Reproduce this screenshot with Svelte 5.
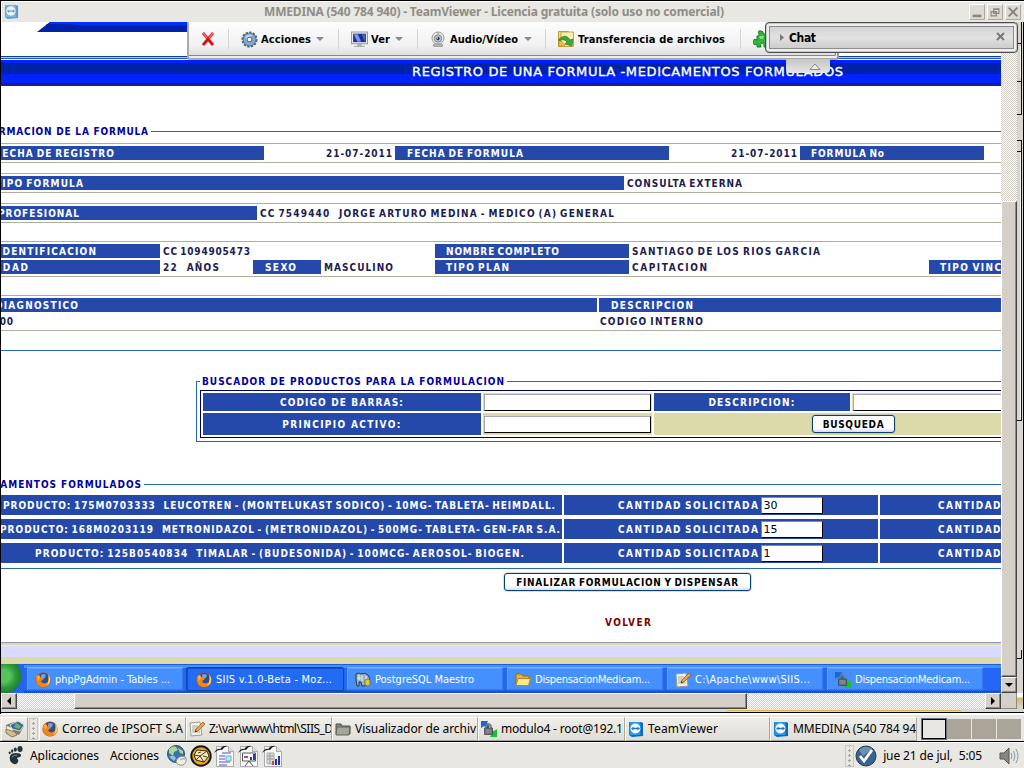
<script>
  // Spreads the letters of a label over the given width in pixels.
  function fit(node, width) {
    node.style.letterSpacing = '0px';
    const natural = node.getBoundingClientRect().width;
    const gaps = Math.max(1, node.textContent.length - 1);
    node.style.letterSpacing = `${(width - natural) / gaps}px`;
  }

  // cell: [width, kind, left padding, text, text width]
  const bands = [
    { top: 0, rows: [[[263, 'b', -6, 'FECHA DE REGISTRO', 119], [131, 'w', 62, '21-07-2011', 66], [274, 'b', 12, 'FECHA DE FORMULA', 116], [131, 'w', 62, '21-07-2011', 66], [184, 'b', 11, 'FORMULA No', 73]]] },
    { top: 10, rows: [[[623, 'b', -6, 'TIPO FORMULA', 88], [377, 'w', 3, 'CONSULTA EXTERNA', 115]]] },
    { top: 10, rows: [[[256, 'b', -3, 'PROFESIONAL', 81], [744, 'w', 3, 'CC 7549440\u00a0\u00a0 JORGE ARTURO MEDINA - MEDICO (A) GENERAL', 354]]] },
    { top: 18, rows: [
      [[159, 'b', -3, 'IDENTIFICACION', 98], [275, 'w', 3, 'CC 1094905473', 87], [194, 'b', 11, 'NOMBRE COMPLETO', 113], [371, 'w', 3, 'SANTIAGO DE LOS RIOS GARCIA', 188]],
      [[159, 'b', -6, 'EDAD', 33], [93, 'w', 3, '22\u00a0\u00a0 AÑOS', 56], [68, 'b', 12, 'SEXO', 31], [114, 'w', 3, 'MASCULINO', 69], [194, 'b', 11, 'TIPO PLAN', 63], [300, 'w', 3, 'CAPITACION', 75], [72, 'b', 11, 'TIPO VINCULACION', 116]]
    ] },
    { top: 18, rows: [
      [[596, 'b', -6, 'DIAGNOSTICO', 83], [2, 'w', 0, '', 0], [402, 'b', 12, 'DESCRIPCION', 82]],
      [[598, 'w', -9, 'A00', 21], [402, 'w', 1, 'CODIGO INTERNO', 103]]
    ] }
  ];

  const products = [
    [2, 'PRODUCTO: 175M0703333\u00a0\u00a0 LEUCOTREN - (MONTELUKAST SODICO) - 10MG- TABLETA- HEIMDALL.', 552, '30'],
    [-1, 'PRODUCTO: 168M0203119\u00a0\u00a0 METRONIDAZOL - (METRONIDAZOL) - 500MG- TABLETA- GEN-FAR S.A.', 560, '15'],
    [34, 'PRODUCTO: 125B0540834\u00a0\u00a0 TIMALAR - (BUDESONIDA) - 100MCG- AEROSOL- BIOGEN.', 489, '1']
  ];

  const xpTasks = [
    ['fox', 'phpPgAdmin - Tables ...', 115],
    ['fox', 'SIIS v.1.0-Beta - Moz...', 116],
    ['pg', 'PostgreSQL Maestro', 99],
    ['folder', 'DispensacionMedicam...', 115],
    ['note', 'C:\\Apache\\www\\SIIS...', 115],
    ['putty', 'DispensacionMedicam...', 115]
  ];

  const panelTasks = [
    ['fox', 'Correo de IPSOFT S.A', 121, 147],
    ['note', 'Z:\\var\\www\\html\\SIIS_D', 124, 146],
    ['cabinet', 'Visualizador de archiv', 121, 146],
    ['putty', 'modulo4 - root@192.1', 122, 147],
    ['tv', 'TeamViewer', 70, 145],
    ['tv', 'MMEDINA (540 784 94', 123, 147]
  ];
</script>

{#snippet icon(name, size)}
  <svg class="icon" width={size} height={size} viewBox="0 0 16 16">
    {#if name === 'fox'}
      <circle cx="8" cy="8" r="7.6" fill="#c8440c" />
      <circle cx="8.6" cy="6.4" r="5.3" fill="#294c9b" />
      <path d="M6 3q2-2 5 0l-1 3-4 1z" fill="#70a6da" />
      <path d="M1 3l1 2 2-2 1 2 4 1-1 2-2 1q1 3 5 2 4-1 2-7l2 3q1 6-5 8-8 1-9-6z" fill="#ec851d" />
      <path d="M13 2q4 5 1 10l-3 2q4-5 2-12z" fill="#ffd34b" />
      <path d="M2 4l2-1 1 3-2 3z" fill="#ffb43a" />
    {:else if name === 'note'}
      <path d="M1 2l10-1 2 13-11 1z" fill="#f5f5ec" stroke="#9a9c91" />
      <path d="M3 5h6M3 7h5M3 9h7M3 11h8" stroke="#a6aaa1" />
      <path d="M6 11l1-3 7-7 2 2-7 7z" fill="#eba13c" stroke="#86592b" stroke-width=".7" />
      <path d="M6 11l.5-2 1.3 1.3z" fill="#222" />
    {:else if name === 'folder'}
      <path d="M1 13V3.5Q1 2 2 2h4l2 2h6v9z" fill="#e6b43c" stroke="#9c6b08" />
      <path d="M1 13.5l2-7h12.5l-2 7z" fill="#ffe98b" stroke="#b98616" />
    {:else if name === 'cabinet'}
      <path d="M1 13V3h5l1 2h8v8z" fill="#85867b" stroke="#52534c" />
      <path d="M2 6h13l-1 8H1z" fill="#a5a69a" stroke="#626359" />
    {:else if name === 'pg'}
      <path d="M1 2q3-2 5 0 4-2 7 1l2 4-2 3-2-2-1 6H7L6 10H4v4H2L1 8z" fill="#9bb3bd" stroke="#263c48" />
      <path d="M4 3v5M7 3v6M11 4v5M2 6h4" stroke="#e7f2f5" />
      <path d="M10 8q3-2 5 0v5q-2 2-5 0z" fill="#e7c33e" stroke="#806013" stroke-width=".7" />
    {:else if name === 'putty'}
      <path d="M0 0h7L6 2l3 3-2 3-4-3-3 2z" fill="#1768d8" />
      <path d="M16 16H9l1-2-2-3 2-2 3 1 3-2z" fill="#18c032" />
      <path d="M5 7V4.500q2.500-3.500 5 0V7" fill="none" stroke="#777d80" stroke-width="1.600" />
      <path d="M3.500 7h8v6.500h-8z" fill="#6d7173" stroke="#3c3f41" stroke-width=".7" />
      <path d="M5 9h5M5 11h5" stroke="#a3a9ac" stroke-width=".7" />
    {:else if name === 'tv'}
      <path d="M1 1h12l2 1v13l-11 1-3-2z" fill="#0d68bd" />
      <path d="M1.500 1h11v13h-11z" fill="#2799ea" />
      <circle cx="7.400" cy="7.500" r="5" fill="#f7fcff" />
      <path d="M3 7.500l2.500-2v1.300h4V5.500l2.500 2-2.500 2V8.200h-4v1.300z" fill="#1678cf" />
    {:else if name === 'gear'}
      <circle cx="8" cy="8" r="6.600" fill="#6f8fb2" stroke="#4b6889" stroke-width="2" stroke-dasharray="2.200 1.200" />
      <circle cx="8" cy="8" r="5.500" fill="#86a6c6" />
      <path d="M4 5q3-3 7-1l-3 2-3 3z" fill="#bed2e5" />
      <circle cx="8" cy="8" r="2.200" fill="#fff" stroke="#587698" />
    {:else if name === 'screen'}
      <path d="M.5 1h15v11H.5z" fill="#eee" stroke="#9b9b9b" />
      <path d="M2 2.500h12v8H2z" fill="#1a2f9c" />
      <path d="M2.500 3h4l3 7H6z" fill="#7f93e6" /><path d="M10 3l3 0v7z" fill="#456bdb" />
      <path d="M6 12h4v2H6z" fill="#aaa" /><path d="M3 14.500h10" stroke="#aaa" />
    {:else if name === 'cam'}
      <path d="M4 13l-1 2q5 2 10 0l-1-2z" fill="#b5b5b5" stroke="#8f8f8f" stroke-width=".7" />
      <circle cx="8" cy="7" r="6" fill="#e9e9e9" stroke="#999" />
      <circle cx="8" cy="7.500" r="3.700" fill="#bbc2cb" stroke="#878787" />
      <circle cx="8" cy="7.500" r="1.700" fill="#213c7b" /><circle cx="7.400" cy="6.900" r=".7" fill="#fff" />
      <path d="M8 1v2.500" stroke="#999" />
    {:else if name === 'transfer'}
      <path d="M.5.5h10v15H.5z" fill="#f6dc77" stroke="#bf992e" />
      <path d="M3 1h12.500v14.500H3z" fill="#f9edb0" stroke="#c5a546" />
      <path d="M1 8q7-6 11 1l3-1-1 7-7-2 2-2q-3-4-8-1z" fill="#43a33b" stroke="#267c28" stroke-width=".7" />
      <path d="M1 11q4-2 6 4H1z" fill="#f5b947" stroke="#c58a26" stroke-width=".6" />
    {/if}
  </svg>
{/snippet}

<div class="desktop">
  <header class="titlebar">
    <div class="app-logo">{@render icon('tv', 15)}</div>
    <div class="title"><span use:fit={460}>MMEDINA (540 784 940) - TeamViewer - Licencia gratuita (solo uso no comercial)</span></div>
    <div class="winbtns">
      <svg viewBox="0 0 16 16"><path d="M3 11h10v3H3z" fill="#8b897f" /></svg>
      <svg viewBox="0 0 16 16"><path d="M6.500 4.500h6v5h-6zM6 5h7M3.500 7.500h6v5h-6zM3 8h7" fill="none" stroke="#8b897f" stroke-width="1.300" /></svg>
      <svg viewBox="0 0 16 16"><path d="M3 3l10 10M13 3L3 13" stroke="#827f76" stroke-width="2" /></svg>
    </div>
  </header>

  <div class="remote">
    <div class="view">
      <main class="web">
        <svg class="slant" width="150" height="10"><path d="M13 0h137v10H0z" fill="#0022aa" /><path d="M13 0h137v3H10z" fill="#0032ff" /><path d="M10 2h27v1H9z" fill="#0022aa" /></svg>
        <div class="thin"></div>
        <div class="banner"><span use:fit={431}>REGISTRO DE UNA FORMULA -MEDICAMENTOS FORMULADOS</span></div>

        <div class="legend first"><b class="clipped"><span use:fit={177}>INFORMACION DE LA FORMULA</span></b><i></i></div>
        <div class="bands">
          {#each bands as band}
            <section class="band" style:margin-top="{band.top}px">
              {#each band.rows as row}
                <div class="row">
                  {#each row as [w, kind, pad, text, tw]}
                    <div class="cell {kind}" style:width="{w}px"><span style:margin-left="{pad}px" use:fit={tw}>{text}</span></div>
                  {/each}
                </div>
              {/each}
            </section>
          {/each}
        </div>
        <div class="rule upper"></div>

        <section class="search">
          <div class="legend"><u></u><b><span use:fit={302}>BUSCADOR DE PRODUCTOS PARA LA FORMULACION</span></b><i></i></div>
          <div class="search-table">
            <div class="blue"><span use:fit={123}>CODIGO DE BARRAS:</span></div>
            <div class="olive"><div class="field"></div></div>
            <div class="blue"><span use:fit={86}>DESCRIPCION:</span></div>
            <div class="olive"><div class="field wide"></div></div>
            <div class="blue"><span use:fit={118}>PRINCIPIO ACTIVO:</span></div>
            <div class="olive"><div class="field"></div></div>
            <div class="olive actions"><button><span use:fit={61}>BUSQUEDA</span></button></div>
          </div>
        </section>

        <div class="legend meds"><b class="clipped"><span use:fit={178}>MEDICAMENTOS FORMULADOS</span></b><i></i></div>
        <div class="products">
          {#each products as [pad, text, tw, qty]}
            <div class="product">
              <div class="blue name"><span style:margin-left="{pad}px" use:fit={tw}>{text}</span></div>
              <div class="blue qty"><span use:fit={140}>CANTIDAD SOLICITADA</span><div class="num">{qty}</div></div>
              <div class="blue rest"><span use:fit={140}>CANTIDAD SOLICITADA</span></div>
            </div>
          {/each}
        </div>
        <div class="rule lower"></div>
        <button class="finish"><span use:fit={222}>FINALIZAR FORMULACION Y DISPENSAR</span></button>
        <div class="volver"><span use:fit={46}>VOLVER</span></div>
        <div class="foot"></div>
        <nav class="xpbar">
          <div class="start"></div>
          {#each xpTasks as [ic, text, w], i}
            <div class="xptask" class:active={i === 1}>{@render icon(ic, 16)}<span use:fit={w}>{text}</span></div>
          {/each}
        </nav>
      </main>
      <div class="vscroll"><div class="vthumb"></div><div class="arrow"><svg viewBox="0 0 8 8"><path d="M0 2h8L4 6z" /></svg></div></div>
      <svg class="edge" width="7" height="671">
        <rect width="7" height="671" fill="#d9d6cf" />
        <path d="M0 21.500h5M0 59.500h5M0 92.500h5M0 118.500h4M0 129.500h4M0 398.500h5M4.500 0v93M4.500 118v281M4.500 628v8M0 636.500h5" stroke="#111" fill="none" />
        <path d="M3.500 24v32M3.500 130v267" stroke="#f6f4ee" />
        <path d="M6.500 0v671" stroke="#000" />
      </svg>
    </div>
    <div class="hscroll">
      <div class="arrow"><svg viewBox="0 0 8 8"><path d="M6 0v8L2 4z" /></svg></div>
      <div class="track left"></div><div class="hthumb"></div><div class="track right"></div>
      <div class="arrow"><svg viewBox="0 0 8 8"><path d="M2 0v8l4-4z" /></svg></div>
      <div class="corner"></div><div class="far"></div>
    </div>
    <div class="understrip"><div class="hint"></div></div>

    <div class="toolbar">
      <svg class="stop" viewBox="0 0 14 14"><path d="M2 1l10 12M12 1L2 13" stroke="#d91018" stroke-width="2.800" /><path d="M2 1l4 5M12 1L8 6" stroke="#f06a67" stroke-width="2" /></svg>
      <em></em>
      <div class="tool t1">{@render icon('gear', 17)}<span use:fit={50}>Acciones</span><s></s></div><em></em>
      <div class="tool t2">{@render icon('screen', 17)}<span use:fit={19}>Ver</span><s></s></div><em></em>
      <div class="tool t3">{@render icon('cam', 16)}<span use:fit={68}>Audio/Vídeo</span><s></s></div><em></em>
      <div class="tool t4">{@render icon('transfer', 16)}<span use:fit={147}>Transferencia de archivos</span></div><em></em>
      <svg class="puzzle" width="17" height="18" viewBox="0 0 17 18"><path d="M6 4Q4 0 8 1q3 0 2 3h6v13h-5q1-4-2-4-3 1-1 4H4v-3Q0 16 0 12q0-4 4-2V6h2z" fill="#31b440" stroke="#148024" /><path d="M6 6h5l-1 3H7z" fill="#86db80" /></svg>
    </div>
    <div class="tab"><svg viewBox="0 0 12 7"><path d="M1 6.500L6 1l5 5.500z" fill="#eee" stroke="#888" /></svg></div>
    <div class="chat"><svg width="6" height="9" viewBox="0 0 6 9"><path d="M1 1v7l4-3.500z" fill="#777" /></svg><span use:fit={27}>Chat</span><svg class="x" width="9" height="9" viewBox="0 0 9 9"><path d="M1 1l7 7M8 1L1 8" stroke="#777" stroke-width="2" /></svg></div>
  </div>

  <footer class="panel tasks">
    <div class="deskbtn"><svg width="20" height="18" viewBox="0 0 20 18"><path d="M1 5l8-3 10 4-5 9-12-4z" fill="#777d77" /><path d="M5 5l8-4 6 4-4 6-8-2z" fill="#3468a5" stroke="#d6d9ca" /><path d="M11 3l5 3-2 3-5-2z" fill="#6eb15c" /><path d="M1 9l9 3 2 3-5 2-6-4z" fill="#d2bd8d" stroke="#8b7650" /><path d="M2 6l5 2 1 3-6-2z" fill="#e8ead8" /></svg></div>
    <div class="grip"></div>
    {#each panelTasks as [ic, text, w, bw]}
      <div class="ptask" style:width="{bw}px">{@render icon(ic, 16)}<span use:fit={w}>{text}</span></div>
    {/each}
    <div class="pager"><div class="on"></div><div></div><div></div><div></div></div>
  </footer>
  <footer class="panel menu">
    <svg class="foot-icon" width="16" height="19" viewBox="0 0 16 19"><path d="M2 10q1-3 6-3 5 0 5 2 0 2-3 2.500-2 .5 0 2 1 2-1 4-3 2-5.500-1Q1 14 2 10z" fill="#26343a" /><ellipse cx="12" cy="3" rx="2.600" ry="3" fill="#26343a" /><ellipse cx="7.300" cy="3.600" rx="1.500" ry="2.200" fill="#26343a" /><ellipse cx="4.200" cy="5" rx="1.200" ry="1.700" fill="#26343a" /><ellipse cx="1.700" cy="6.800" rx="1.100" ry="1.400" fill="#26343a" /><path d="M4 11q2-2 5-2" stroke="#798d94" fill="none" /></svg>
    <span class="m1" use:fit={69}>Aplicaciones</span>
    <span class="m2" use:fit={49}>Acciones</span>
    <div class="launch">
      <svg width="22" height="22" viewBox="0 0 22 22"><circle cx="10" cy="9" r="8.500" fill="#3972ad" stroke="#294e72" /><path d="M3 4q4-4 7-2l2 3-4 2-1 4-4-3zM12 3l5 3v3l-3-1z" fill="#b2d491" /><path d="M3 12q5-3 7 1l-2 3z" fill="#8dc2e1" /><path d="M11 14q5-5 9-1 1 5-3 7-5 1-7-3z" fill="#eeeee8" stroke="#8d9087" /><path d="M14 15q3-2 5-1" stroke="#999" fill="none" /></svg>
      <svg width="22" height="22" viewBox="0 0 22 22"><circle cx="11" cy="11" r="9.700" fill="#e9a62d" stroke="#171714" stroke-width="2" /><path d="M4 10l3-5 10 1 2 5-5 6-8-2z" fill="#f8e9b7" stroke="#372b13" /><path d="M4 10l6 1 7-5M6 15l4-4 4 6M8 8l3-1M13 11l4 1" stroke="#493a19" fill="none" /></svg>
      {#each [0, 1, 2] as doc}
        <svg width="22" height="22" viewBox="0 0 22 22"><path d="M2.500 1.500h12l5 5v15h-17z" fill="#fafafa" stroke="#aaa" /><path d="M14.500 1.500v5h5" fill="#ddd" stroke="#aaa" /><path d="M0 8q3-5 6-4 3-4 7-3-3 1-5 4-3-1-8 3z" fill="#222" />
          {#if doc === 0}<path d="M8 8h9M5 11h6M5 14h6M5 17h11M5 20h8" stroke="#8b85db" stroke-width="1.500" /><path d="M12 11h5v5h-5z" fill="#c6eaf0" stroke="#62acc1" />
          {:else if doc === 1}<path d="M4.500 8h13v8h-13zM11 16l-4 5M11 16l4 5" fill="#fff" stroke="#555" /><path d="M6 11h4v2H6z" fill="#cc4058" /><path d="M12 12h2v3h-2zM15 9h2v6h-2z" fill="#2b38a7" />
          {:else}<path d="M5 8h7v11H5z" fill="#ddd" stroke="#aaa" /><path d="M5 11h7M5 14h7M8 8v11" stroke="#999" /><path d="M10 16h2v4h-2z" fill="#cc4058" /><path d="M13 14h2v6h-2zM16 11h2v9h-2z" fill="#2733a9" />{/if}
        </svg>
      {/each}
    </div>
    <div class="tray">
      <div class="grip"></div>
      <svg width="22" height="22" viewBox="0 0 22 22"><circle cx="11" cy="11" r="10" fill="#3a638d" stroke="#203c5b" /><path d="M4 5q6-6 13-1L8 11z" fill="#6c91b5" /><path d="M5 11l4 5 8-11" fill="none" stroke="#fff" stroke-width="2.800" /></svg>
      <span use:fit={99}>jue 21 de jul,&nbsp; 5:05</span>
      <svg class="speaker" width="20" height="18" viewBox="0 0 20 18"><path d="M1 6h4l5-5v16l-5-5H1z" fill="#858881" stroke="#555" /><path d="M12 6q2 3 0 6M14.500 4q3 5 0 10M17 2q4 7 0 14" fill="none" stroke="#829ba9" /></svg>
    </div>
  </footer>
</div>

<style>
  :global(body) { margin: 0; overflow: hidden; }
  .desktop, .desktop * { box-sizing: border-box; }
  .desktop { width: 1024px; height: 768px; display: flex; flex-direction: column; overflow: hidden; background: #eae8e3; color: #000; white-space: nowrap; font-family: "DejaVu Sans Condensed", "DejaVu Sans", sans-serif; font-stretch: condensed; }
  span { display: inline-block; flex: none; }
  .icon { flex: none; display: block; }
  button { padding: 0; margin: 0; font: bold 10px/14px "DejaVu Sans Condensed", "DejaVu Sans", sans-serif; font-stretch: condensed; color: #000; word-spacing: -1px; }
  button span { padding-top: 2px; }

  .titlebar { height: 22px; flex: none; display: flex; align-items: center; border-top: 1px solid #000; border-left: 1px solid #000; background: #e9e7e2; box-shadow: inset 1px 1px #fff; }
  .app-logo { width: 263px; padding-left: 3px; opacity: .6; }
  .title { flex: 1; font: bold 12px/20px "Noto Sans", sans-serif; color: #8f8d87; padding-top: 1px; }
  .winbtns { display: flex; gap: 2px; padding: 0 3px 0 0; }
  .winbtns svg { width: 16px; height: 16px; background: #dedbd3; border: 1px solid #aaa89f; border-top-color: #fff; border-left-color: #fff; }

  .remote { height: 692px; flex: none; position: relative; border-left: 1px solid #000; background: #dedbd3; }
  .view { height: 671px; display: flex; overflow: hidden; }
  .web { width: 1000px; height: 671px; overflow: hidden; background: #fff; display: flex; flex-direction: column; font-weight: bold; font-size: 10px; line-height: 14px; }
  .web > * { flex: none; }
  .slant { display: block; margin-left: 36px; }
  .thin { height: 4px; margin-top: 24px; background: linear-gradient(#1238ac 0 1px, #a9d0ff 1px 2px, #1a5ed0 2px 3px, #fff 3px); }
  .banner { height: 26px; padding: 3px 0 0 411px; background: linear-gradient(#0022ff 0 3px, #0022a8 3px 14px, #0022ff 14px 23px, #1b1d98 23px); color: #fff; font: 13px/18px "DejaVu Sans", sans-serif; -webkit-text-stroke: .35px #fff; }
  .legend { display: flex; align-items: center; height: 14px; color: #0000a0; }
  .legend b { display: flex; flex: none; }
  .legend span, .cell span { padding-top: 1px; }
  .legend i { flex: 1; height: 1px; background: #236ba3; margin-left: 2px; }
  .legend u { width: 4px; height: 1px; background: #236ba3; margin-right: 2px; }
  .cell, .product { word-spacing: -1.500px; }
  .first { margin-top: 38px; }
  .first .clipped { margin-left: -30px; }
  .bands { margin-top: 5px; }
  .band { border: solid #aeae9e; border-width: 1px 0; padding: 2px 0; display: flex; flex-direction: column; gap: 2px; }
  .row { display: flex; height: 14px; }
  .cell { flex: none; height: 14px; display: flex; overflow: hidden; }
  .b, .blue { background: #2449aa; color: #fff; }
  .w { color: #1c1c50; }
  .rule { height: 1px; background: #236ba3; }
  .upper { margin-top: 19px; }

  .search { width: 805px; height: 68px; margin: 23px 0 0 195px; display: flex; flex-direction: column; position: relative; }
  .search::before { content: ""; position: absolute; inset: 7px 0 0; border: solid #236ba3; border-width: 0 0 1px 1px; }
  .search-table { height: 48px; margin: 2px 0 0 4px; border: 1px solid #000050; border-right: 0; padding: 2px 0 2px 2px; display: grid; grid-template-columns: 278px 169px 196px 149px; grid-template-rows: 18px 22px; gap: 2px; }
  .search-table .blue { display: flex; align-items: center; justify-content: center; }
  .blue span { padding-top: 1px; }
  .olive { background: #dcdaaa; display: flex; align-items: center; padding-left: 1px; overflow: hidden; }
  .field { width: 167px; height: 17px; background: #fff; border: 1px solid #000; border-top-color: #aaa; border-left-color: #aaa; flex: none; }
  .field.wide { width: 200px; }
  .actions { grid-column: span 2; padding-left: 158px; }
  .actions button { width: 83px; height: 18px; }
  button { background: linear-gradient(#fff 75%, #d8d8ff); border: 1px solid #064365; border-radius: 3px; box-shadow: 0 0 0 .5px #a9b9d2; display: flex; align-items: center; justify-content: center; }

  .meds { margin-top: 35px; }
  .meds .clipped { margin-left: -38px; }
  .meds span { padding-top: 2px; }
  .products { margin-top: 4px; display: flex; flex-direction: column; gap: 4px; }
  .product { height: 20px; display: flex; gap: 2px; }
  .product .blue { height: 20px; display: flex; align-items: center; overflow: hidden; flex: none; }
  .name { width: 561px; }
  .qty { width: 314px; padding-left: 54px; }
  .rest { width: 121px; padding-left: 58px; }
  .num { width: 62px; height: 17px; margin: 0 0 0 2px; padding-left: 1px; background: #fff; color: #000; border: 1px solid #000; border-top-color: #888; border-left-color: #888; font: 11px/16px "DejaVu Sans", sans-serif; }
  .lower { margin-top: 5px; }
  .finish { width: 247px; height: 18px; margin: 4px 0 0 503px; }
  .volver { margin: 25px 0 0 604px; color: #800000; }
  .foot { height: 22px; margin-top: 12px; background: linear-gradient(#9494b0 0 1px, #dcdaaa 1px 3px, #ffdcf0 3px 4px, #dadaff 4px 15px, #dcdaaa 15px); }

  .xpbar { height: 29px; display: flex; gap: 2px; padding: 3px 0 1px; background: linear-gradient(#1e5ee6 0 1px, #4791ff 1px 4px, #2466f5 4px 26px, #1d50c8 27px); font-weight: normal; font-size: 11px; color: #fff; }
  .start { width: 23px; margin: -3px 0 -1px; background: radial-gradient(circle at 3px 12px, #55c55a 0 6px, #2c9838 12px, #237e35 17px, #2462ef 18px); }
  .xptask { width: 158px; height: 24px; padding: 1px 0 0 8px; display: flex; align-items: center; gap: 4px; background: #4490ff; border: 1px solid #2968e8; border-top-color: #76adff; border-radius: 2px; box-shadow: inset -1px -1px #3877e7, inset 1px 1px #62a1ff; }
  .xptask.active { background: #226cf5; border-color: #1246af; box-shadow: inset 1px 1px #174fc3; padding: 2px 0 0 9px; }

  .vscroll { width: 16px; height: 671px; flex: none; display: flex; flex-direction: column; padding-top: 179px; background: repeating-conic-gradient(#d2cec6 0 25%, #fff 0 50%) 0 0 / 2px 2px; }
  .vthumb { height: 476px; }
  .vthumb, .hthumb, .arrow { background: #d4d0c8; border: 1px solid #444; border-top-color: #fff; border-left-color: #fff; box-shadow: inset -1px -1px #8e8b84; }
  .arrow { width: 16px; height: 16px; flex: none; display: grid; place-items: center; }
  .arrow svg { width: 8px; height: 8px; }
  .edge { flex: none; display: block; }
  .hscroll { height: 16px; display: flex; }
  .track { background: repeating-conic-gradient(#d2cec6 0 25%, #fff 0 50%) 0 0 / 2px 2px; }
  .left { width: 57px; }
  .hthumb { width: 673px; }
  .right { width: 238px; }
  .corner { width: 16px; background: #d4d0c8; border: 1px solid #8e8b84; border-width: 0 1px 1px 0; }
  .far { width: 7px; border-right: 1px solid #000; background: linear-gradient(#fff 0 4px, #d7b95a 5px, #d4d0c8 13px); }
  .understrip { height: 5px; border-bottom: 1px solid #fff; display: flex; background: linear-gradient(#d8d8d2 0 3px, #000 3px 4px, #fff 4px); }
  .hint { width: 234px; height: 2px; margin-left: 726px; background: #f4eaa8; border-bottom: 1px solid #d4b959; }

  .toolbar { position: absolute; left: 186px; top: 0; width: 652px; height: 38px; padding: 0 0 2px 14px; display: flex; align-items: center; background: linear-gradient(#fdfdfd, #f1f1f1 65%, #dadada); border: 2px solid #aaa; border-top: 0; border-right-color: #999; box-shadow: inset -1px -2px #eee, inset -2px -3px #888; border-radius: 0 0 3px 3px; font: bold 11px/16px "DejaVu Sans Condensed", "DejaVu Sans", sans-serif; }
  .toolbar span { padding-top: 1px; }
  .stop { width: 14px; height: 14px; margin: 0 13px 0 -2px; flex: none; }
  .toolbar em { width: 1px; height: 20px; background: #d4d4d4; flex: none; }
  .tool { display: flex; align-items: center; height: 20px; gap: 4px; flex: none; }
  .tool s { width: 0; height: 0; border: 4px solid transparent; border-top: 4px solid #888; border-bottom: 0; margin-left: 2px; }
  .t1 { width: 109px; padding-left: 12px; gap: 3px; }
  .t2 { width: 78px; padding-left: 12px; gap: 3px; }
  .t3 { width: 127px; padding-left: 12px; }
  .t4 { width: 194px; padding-left: 12px; gap: 4px; }
  .puzzle { margin-left: 12px; flex: none; }
  .tab { position: absolute; left: 785px; top: 37px; width: 44px; height: 14px; background: linear-gradient(#c5c5c5, #e6e6e6); border-radius: 0 0 4px 4px; display: flex; align-items: center; padding: 0 0 0 23px; }
  .tab svg { width: 12px; height: 7px; }
  .chat { position: absolute; left: 764px; top: 0; width: 253px; height: 31px; display: flex; align-items: center; padding: 0 12px 0 13px; background: linear-gradient(#cecece, #e1e1e1 50%, #c6c6c6); border: 1px solid #4a4a4a; border-radius: 4px; box-shadow: inset 0 0 0 1px #c8c8c8, inset 0 0 0 3px #eee, inset 0 0 0 4px #8c8c8c; font: bold 12px/16px "DejaVu Sans Condensed", sans-serif; }
  .chat > span { margin-left: 4px; }
  .chat .x { margin: -2px 0 0 auto; }

  .panel { display: flex; flex: none; align-items: center; font: 12px/18px "Noto Sans", sans-serif; background: #e9e7e2; }
  .tasks { height: 28px; padding: 2px 0 1px 1px; border-top: 1px solid #fff; border-bottom: 1px solid #000; }
  .deskbtn, .ptask { height: 24px; display: flex; align-items: center; background: linear-gradient(#efeee9, #dfddd6); border: 1px solid #aaa79c; border-top-color: #fff; border-left-color: #fff; overflow: hidden; flex: none; }
  .deskbtn { width: 27px; padding-left: 3px; }
  .grip { width: 9px; height: 22px; margin: 0 1px; border: 1px solid #c9c7bf; background: radial-gradient(circle at 50% 50%, #a7a59c 1px, transparent 1.300px) 1px 2px / 5px 5px repeat-y; flex: none; }
  .ptask { padding-left: 2px; gap: 4px; }
  .pager { margin-left: 5px; display: flex; gap: 1px; }
  .pager div { width: 24px; height: 20px; background: #aaa598; }
  .pager .on { background: #e9e7e2; border: 1px solid #000; box-shadow: 0 0 0 1px #647382; }
  .menu { height: 26px; padding-left: 8px; border-top: 1px solid #fff; }
  .m1 { margin-left: 6px; }
  .m2 { margin-left: 11px; }
  .launch { display: flex; gap: 2px; margin-left: 7px; }
  .tray { display: flex; align-items: center; margin-left: auto; padding-right: 5px; }
  .tray > span { margin-left: 6px; margin-right: 17px; }
</style>
